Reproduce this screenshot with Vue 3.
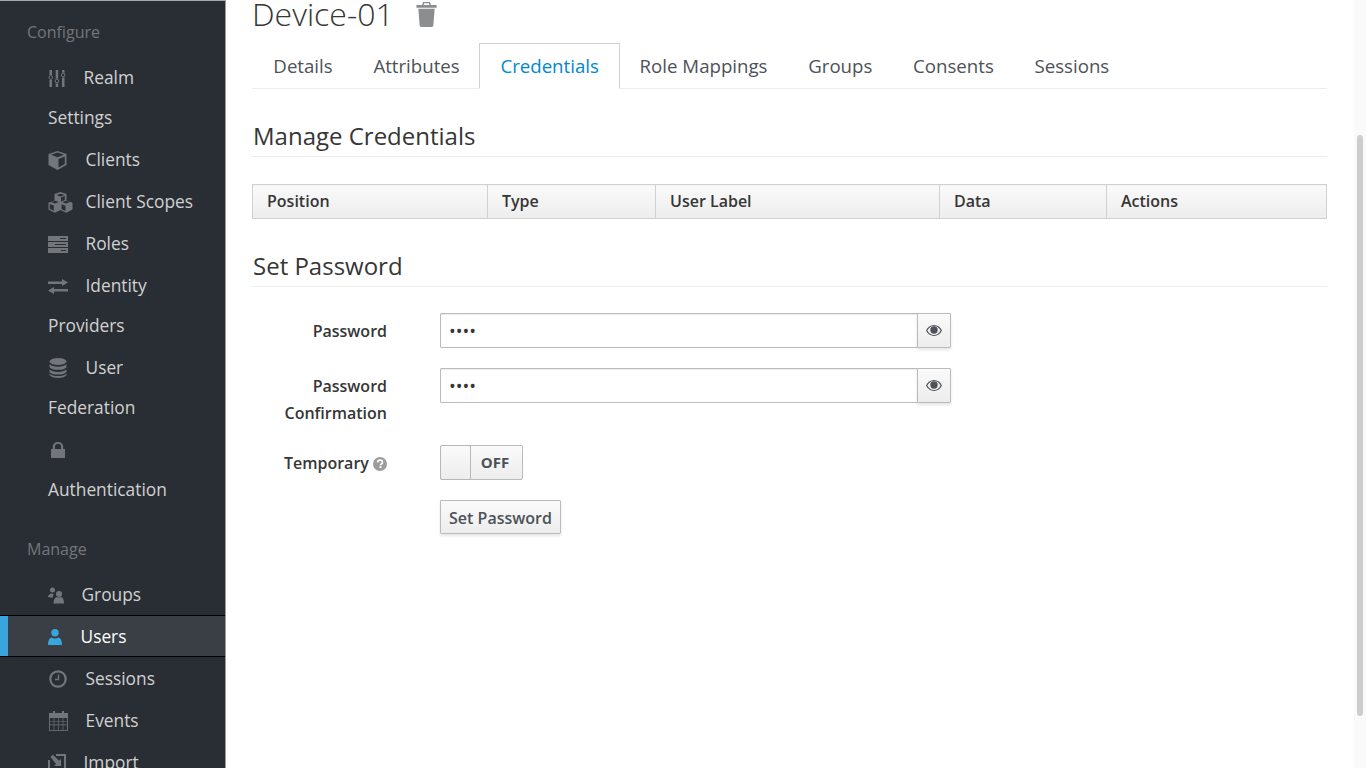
<script setup>
const configure = [
  { label: 'Realm Settings', icon: 'sliders', cls: 'w31' },
  { label: 'Clients', icon: 'cube', cls: 'w33' },
  { label: 'Client Scopes', icon: 'cubes', cls: 'w33' },
  { label: 'Roles', icon: 'roles', cls: 'w33' },
  { label: 'Identity Providers', icon: 'exchange', cls: 'w33' },
  { label: 'User Federation', icon: 'database', cls: 'w33' },
  { label: 'Authentication', icon: 'lock', cls: 'w33' }
]
const manage = [
  { label: 'Groups', icon: 'users', cls: 'w29' },
  { label: 'Users', icon: 'user', cls: 'w28' },
  { label: 'Sessions', icon: 'clock', cls: 'w33' },
  { label: 'Events', icon: 'calendar', cls: 'w33' },
  { label: 'Import', icon: 'import', cls: 'w31' }
]
manage[1].active = true
const sections = [
  { title: 'Configure', items: configure },
  { title: 'Manage', items: manage }
]
const tabs = ['Details', 'Attributes', 'Credentials', 'Role Mappings', 'Groups', 'Consents', 'Sessions']
const columns = [
  { label: 'Position', cls: 'c1' },
  { label: 'Type', cls: 'c2' },
  { label: 'User Label', cls: 'c3' },
  { label: 'Data', cls: 'c4' },
  { label: 'Actions', cls: 'c5' }
]
</script>

<template>
  <div class="page">
    <aside class="sidebar">
      <section v-for="s in sections" :key="s.title" class="section">
        <h2 class="section-title">{{ s.title }}</h2>
        <ul class="nav">
          <li v-for="it in s.items" :key="it.label" class="nav-item" :class="{ active: it.active }">
            <a class="nav-link">
              <span class="ico" :class="it.cls">
                <svg v-if="it.icon === 'sliders'" width="18" height="17" viewBox="0 0 18 17" fill="currentColor">
                  <path d="M1.500 0h2.500v17H1.500zM7.700 0h2.500v17H7.700zM14 0h2.500v17H14z"/>
                  <circle cx="2.800" cy="7.500" r="2.600" fill="#292e34"/>
                  <circle cx="8.900" cy="11" r="2.600" fill="#292e34"/>
                  <circle cx="15.200" cy="5" r="2.600" fill="#292e34"/>
                  <circle cx="2.800" cy="7.500" r="1.800" fill="none" stroke="currentColor" stroke-width="1"/>
                  <circle cx="8.900" cy="11" r="1.800" fill="none" stroke="currentColor" stroke-width="1"/>
                  <circle cx="15.200" cy="5" r="1.800" fill="none" stroke="currentColor" stroke-width="1"/>
                </svg>
                <svg v-else-if="it.icon === 'cube'" width="19" height="19" viewBox="0 0 19 19" fill="currentColor">
                  <path d="M9.500 0 18.500 3v11l-9 5-9-5V3zM3 3.800l6.500 2.500L16 3.800 9.500 1.600zM10.500 8v8.500l6.300-3.500V5.500z"/>
                </svg>
                <svg v-else-if="it.icon === 'cubes'" width="25" height="21" viewBox="0 0 25 21" fill="currentColor">
                  <path d="M12.500 0l6 2v6.500l6 2.200v6.800l-6.300 3.300-5.700-2.800-5.700 2.800L.5 17.500v-6.800l6-2.200V2zM8.500 3l4 1.400 4-1.400-4-1.300zM7 11.500l3.800-1.500L7 8.700 3 10l4 1.500zM18 11.500l4-1.500-4-1.300-3.800 1.300zM13.500 12.200v5l4 1.800v-5.300zM1.800 12v4.800l4 2v-5.300zM13 5.500v4l3.800-1.400V4z"/>
                </svg>
                <svg v-else-if="it.icon === 'roles'" width="20" height="17" viewBox="0 0 20 17" fill="currentColor">
                  <path d="M0 0h20v5H0zM0 6h20v5H0zM0 12h20v5H0z"/>
                  <path fill="#292e34" d="M12 2h6v1h-6zM7 8h11v1H7zM13 14h5v1h-5z"/>
                </svg>
                <svg v-else-if="it.icon === 'exchange'" width="20" height="15" viewBox="0 0 20 15" fill="currentColor">
                  <path d="M0 2.500h14V0l6 3.500-6 3.500V5H0zM20 10v2.500H6V15L0 11.500 6 8v2z"/>
                </svg>
                <svg v-else-if="it.icon === 'database'" class="nudge" width="18" height="20" viewBox="0 0 18 20" fill="currentColor">
                  <ellipse cx="9" cy="3.500" rx="8.500" ry="3.500"/>
                  <path d="M.5 6c1.500 2 5 2.700 8.500 2.700S16 8 17.500 6v3c-1 2-4.500 2.800-8.500 2.800S1.500 11 .5 9zM.5 11.200c1.500 2 5 2.700 8.500 2.700s7-.7 8.500-2.700v2.500c-1 2-4.500 2.800-8.500 2.800s-7.500-.8-8.500-2.800zM.5 15.500c1.500 2 5 2.500 8.500 2.500s7-.5 8.500-2.500V17c-1 2-4.500 3-8.500 3s-7.500-1-8.500-3z"/>
                </svg>
                <svg v-else-if="it.icon === 'lock'" class="lock" width="14" height="16" viewBox="0 0 14 16" fill="currentColor">
                  <path d="M0 7h1.800V4.500a5.200 4.500 0 0 1 10.400 0V7H14v9H0zM4 7h6V4.500a3 2.800 0 0 0-6 0z"/>
                </svg>
                <svg v-else-if="it.icon === 'users'" width="16" height="17" viewBox="0 0 16 16" fill="currentColor">
                  <circle cx="4.500" cy="2.500" r="2.500"/>
                  <circle cx="11" cy="6.500" r="3"/>
                  <path d="M0 9.500c.4-2 2-3.500 3.500-3.500 .8 0 1.600.2 2.200.7-.7.800-1 1.900-.9 3.300-.7 0-3.400-.1-4.800-.5zM5.500 16c0-3 .8-5.800 3-6.500.8.500 4 .5 5 0C15.300 10.300 16 13 16 16z"/>
                </svg>
                <svg v-else-if="it.icon === 'user'" width="14" height="16" viewBox="0 0 14 16" fill="currentColor">
                  <circle cx="7" cy="3.700" r="3.700"/>
                  <path d="M0 16c0-4.500 1.300-7 3.500-7.500 1.800 1.200 5.200 1.200 7 0C12.700 9 14 11.500 14 16z"/>
                </svg>
                <svg v-else-if="it.icon === 'clock'" class="nudge" width="18" height="18" viewBox="0 0 18 18" fill="none" stroke="currentColor">
                  <circle cx="9" cy="9" r="7.700" stroke-width="2.200"/>
                  <path d="M9.500 4.500v5H6" stroke-width="1.400"/>
                </svg>
                <svg v-else-if="it.icon === 'calendar'" class="nudge" width="19" height="20" viewBox="0 0 19 20" fill="currentColor" fill-rule="evenodd">
                  <path d="M4 0h2v2h7V0h2v2h4v18H0V2h4zM.8 7v3h3.900V7zM5.300 7v3h3.900V7zM9.800 7v3h3.900V7zM14.300 7v3h3.900V7zM.8 10.600v3h3.900v-3zM5.300 10.600v3h3.900v-3zM9.800 10.600v3h3.900v-3zM14.300 10.600v3h3.900v-3zM.8 14.200v5h3.900v-5zM5.300 14.200v5h3.900v-5zM9.800 14.200v5h3.900v-5zM14.300 14.200v5h3.900v-5z"/>
                </svg>
                <svg v-else-if="it.icon === 'import'" width="18" height="18" viewBox="0 0 18 18" fill="currentColor">
                  <path d="M0 6h2v10h10v2H0zM8 0h10v16h-4v-2h2V2H8z"/>
                  <path d="M2.500 3 5 .8l6 6 2-2V12H6l2-2z"/>
                </svg>
              </span>{{ ' ' }}{{ it.label }}
            </a>
          </li>
        </ul>
      </section>
    </aside>

    <main class="main">
      <h1 class="title">
        <span>Device-01</span>
        <svg class="trash" width="21" height="25" viewBox="0 0 21 26" fill="currentColor">
          <path d="M7 0h7l1.200 3H21v3H0V3h5.800zM8 1.400 7.500 3h6L13 1.400z"/>
          <path d="M2 7h17l-1.400 17.500a1.500 1.500 0 0 1-1.500 1.500H4.900a1.500 1.500 0 0 1-1.500-1.500z"/>
        </svg>
      </h1>

      <ul class="tabs">
        <li v-for="t in tabs" :key="t" class="tab" :class="{ on: t === 'Credentials' }">{{ t }}</li>
      </ul>

      <h3 class="sub first">Manage Credentials</h3>

      <table class="grid">
        <thead>
          <tr>
            <th v-for="c in columns" :key="c.label" :class="c.cls">{{ c.label }}</th>
          </tr>
        </thead>
      </table>

      <h3 class="sub second">Set Password</h3>

      <form class="form" @submit.prevent>
        <label class="lab">Password</label>
        <div class="field">
          <input class="inp" type="password" value="abcd" />
          <button type="button" class="eye-btn">
            <svg width="16" height="11" viewBox="0 0 16 11">
              <path d="M8 0C4.500 0 1.500 2.200 0 5.500 1.500 8.800 4.500 11 8 11s6.500-2.200 8-5.500C14.500 2.200 11.500 0 8 0z" fill="#4d5258"/>
              <path d="M8 1C5 1 2.700 2.800 1.300 5.500 2.700 8.200 5 10 8 10s5.300-1.800 6.700-4.500C13.300 2.800 11 1 8 1z" fill="#eee"/>
              <circle cx="8" cy="5" r="3.700" fill="#4d5258"/>
            </svg>
          </button>
        </div>

        <label class="lab">Password Confirmation</label>
        <div class="field">
          <input class="inp" type="password" value="abcd" />
          <button type="button" class="eye-btn">
            <svg width="16" height="11" viewBox="0 0 16 11">
              <path d="M8 0C4.500 0 1.500 2.200 0 5.500 1.500 8.800 4.500 11 8 11s6.500-2.200 8-5.500C14.500 2.200 11.500 0 8 0z" fill="#4d5258"/>
              <path d="M8 1C5 1 2.700 2.800 1.300 5.500 2.700 8.200 5 10 8 10s5.300-1.800 6.700-4.500C13.300 2.800 11 1 8 1z" fill="#eee"/>
              <circle cx="8" cy="5" r="3.700" fill="#4d5258"/>
            </svg>
          </button>
        </div>

        <label class="lab">Temporary
          <svg class="help" width="14" height="14" viewBox="0 0 14 14">
            <circle cx="7" cy="7" r="7" fill="#9c9c9c"/>
            <path d="M4.600 5.300C4.800 3.900 5.800 3.200 7 3.200c1.400 0 2.500.8 2.500 2 0 1.800-2 1.700-2 3.100" fill="none" stroke="#fff" stroke-width="1.700"/>
            <path d="M6.500 9.200h2v1.800h-2z" fill="#fff"/>
          </svg>
        </label>
        <div class="field">
          <div class="toggle">
            <span class="knob"></span>
            <span class="off">OFF</span>
          </div>
        </div>

        <span></span>
        <div class="field">
          <button type="button" class="set">Set Password</button>
        </div>
      </form>
    </main>

    <div class="scroll"><div class="thumb"></div></div>
  </div>
</template>

<style>
html, body { margin: 0; overflow: hidden; }
</style>

<style scoped>
.page {
  display: flex;
  width: 1366px;
  height: 768px;
  overflow: hidden;
  font-family: "Open Sans", sans-serif;
  font-size: 16px;
  color: #363636;
  background: #fff;
}
.sidebar {
  flex: 0 0 226px;
  box-sizing: border-box;
  height: 768px;
  overflow: hidden;
  background: #292e34;
  border-top: 1px solid #a6a8aa;
  border-right: 1px solid #9a9c9e;
  padding-top: 11px;
}
.section { margin-bottom: 19px; }
.section-title {
  margin: 0;
  padding: 9px 0 0 27px;
  font-size: 16px;
  font-weight: 400;
  line-height: 22px;
  height: 35px;
  box-sizing: content-box;
  color: #72767b;
}
.nav { list-style: none; margin: 0; padding: 0; }
.nav-item {
  border-top: 1px solid transparent;
  border-bottom: 1px solid transparent;
}
.nav-link {
  display: block;
  padding: 0 28px 0 48px;
  line-height: 40px;
  font-size: 17.33px;
  color: #d1d1d1;
}
.ico {
  display: inline-block;
  color: #72767b;
  vertical-align: middle;
  line-height: 0;
  position: relative;
  top: -1px;
}
.ico svg { display: block; }
.w28 { width: 28px; }
.w29 { width: 29px; }
.w31 { width: 31px; }
.w33 { width: 33px; }
.nav-item.active {
  background: #393f44;
  border-top-color: #000;
  border-bottom-color: #000;
  box-shadow: inset 8px 0 0 #39a5dc;
}
.nav-item.active .nav-link { color: #fff; }
.nav-item.active .ico { color: #39a5dc; }
.lock { margin-left: 3px; }
.nudge { margin-left: 1px; }

.main {
  flex: 1;
  min-width: 0;
  padding: 0 27px 0 26px;
}
.title {
  display: flex;
  align-items: center;
  margin: -5px 0 0;
  height: 38px;
  font-size: 32px;
  font-weight: 300;
  line-height: 38px;
  color: #363636;
}
.trash { margin-left: 22px; color: #8b8d8f; }
.tabs {
  display: flex;
  list-style: none;
  margin: 10px 0 0;
  padding: 0;
  border-bottom: 1px solid #ededed;
  height: 45px;
  box-sizing: content-box;
}
.tab {
  box-sizing: border-box;
  height: 46px;
  padding: 0 20.35px;
  margin-right: -2px;
  line-height: 44px;
  font-size: 18.67px;
  color: #4d5258;
  border: 1px solid transparent;
  border-radius: 1px 1px 0 0;
}
.tab.on {
  color: #0088ce;
  background: #fff;
  border-color: #d1d1d1 #d1d1d1 #fff;
}
.sub {
  margin: 0;
  font-size: 24px;
  font-weight: 400;
  line-height: 30px;
  padding-left: 1px;
  padding-bottom: 5px;
  border-bottom: 1px solid #ededed;
  color: #363636;
}
.first { margin-top: 32px; }
.second { margin-top: 32px; }
.grid {
  width: 100%;
  border-collapse: collapse;
  table-layout: fixed;
  margin-top: 27px;
}
.grid th {
  height: 31px;
  padding: 0 14px 2px;
  text-align: left;
  font-size: 16px;
  font-weight: 600;
  color: #363636;
  background: linear-gradient(to bottom, #fafafa 0, #ededed 100%);
  border: 1px solid #d1d1d1;
}
.c1 { width: 206px; }
.c2 { width: 139px; }
.c3 { width: 255px; }
.c4 { width: 138px; }
.form {
  display: grid;
  grid-template-columns: 135px 1fr;
  column-gap: 53px;
  row-gap: 18px;
  margin-top: 26px;
}
.lab {
  text-align: right;
  font-weight: 600;
  line-height: 27px;
  padding-top: 5px;
}
.help { vertical-align: -2px; }
.field { display: flex; align-items: flex-start; min-height: 37px; }
.inp {
  box-sizing: border-box;
  width: 478px;
  height: 35px;
  padding: 2px 8px;
  border: 1px solid #bbb;
  border-radius: 1px;
  font-family: inherit;
  font-size: 18px;
  color: #363636;
  outline: none;
  box-shadow: inset 0 1px 1px rgba(3, 3, 3, .08);
}
.eye-btn {
  box-sizing: border-box;
  width: 34px;
  height: 35px;
  margin-left: -1px;
  padding: 0;
  display: flex;
  align-items: center;
  justify-content: center;
  border: 1px solid #bbb;
  border-radius: 0 1px 1px 0;
  background: linear-gradient(to bottom, #fafafa 0, #ededed 100%);
  box-shadow: 0 2px 3px rgba(3, 3, 3, .1);
}
.toggle {
  box-sizing: border-box;
  display: flex;
  width: 83px;
  height: 35px;
  border: 1px solid #bbb;
  border-radius: 2px;
  background: linear-gradient(to bottom, #fafafa 0, #ededed 100%);
  font-size: 15px;
  font-weight: 600;
}
.knob {
  box-sizing: border-box;
  width: 31px;
  height: 35px;
  margin: -1px 0 -1px -1px;
  border: 1px solid #b7b7b7;
  border-radius: 2px;
  background: linear-gradient(to bottom, #fafafa 0, #ededed 100%);
}
.off {
  flex: 1;
  padding-right: 3px;
  text-align: center;
  line-height: 33px;
  color: #4d5258;
  font-weight: 700;
}
.set {
  box-sizing: border-box;
  height: 34px;
  width: 121px;
  padding: 2px 0 0;
  border: 1px solid #bbb;
  border-radius: 1px;
  background: linear-gradient(to bottom, #fafafa 0, #ededed 100%);
  box-shadow: 0 2px 3px rgba(3, 3, 3, .1);
  font-family: inherit;
  font-size: 16px;
  font-weight: 600;
  color: #4d5258;
}
.scroll {
  flex: 0 0 12px;
  height: 768px;
  background: #fafafa;
}
.thumb {
  width: 6px;
  height: 581px;
  margin: 135px 0 0 3px;
  background: #cdcdcd;
  border-radius: 3px;
}
</style>
